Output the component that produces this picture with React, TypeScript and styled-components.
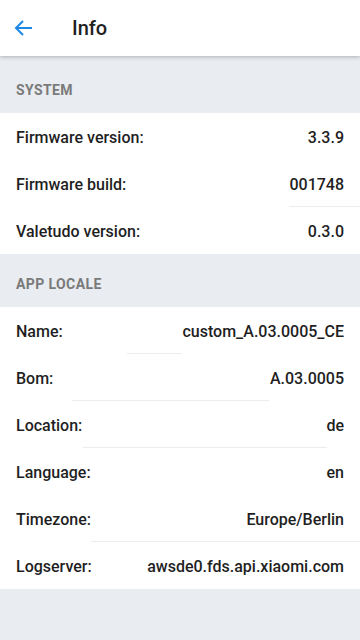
import styled, { createGlobalStyle } from 'styled-components';

const GlobalStyle = createGlobalStyle`
	html, body {
		margin: 0;
		padding: 0;
		background: #e9ecf0;
		font-family: Roboto, 'Noto Sans', sans-serif;
	}
`;

const Page = styled.div`
	width: 360px;
	min-height: 640px;
	background: #e9ecf0;
`;
const Toolbar = styled.header`
	display: flex;
	align-items: center;
	height: 56px;
	background: #ffffff;
	box-shadow: 0 1px 4px rgba(0, 0, 0, 0.25);
	position: relative;
	z-index: 1;
`;
const BackButton = styled.button`
	display: flex;
	align-items: center;
	justify-content: center;
	width: 24px;
	height: 24px;
	margin-left: 12px;
	padding: 0;
	border: none;
	background: none;
	color: #1e88e5;
`;
const Title = styled.h1`
	margin: 0 0 0 36px;
	font-size: 20px;
	font-weight: 500;
	color: #1f1f1f;
`;
const Content = styled.main`
	padding-top: 4px;
`;
const SectionTitle = styled.div`
	padding: 22px 16px 15px;
	font-size: 14px;
	line-height: 16px;
	font-weight: 700;
	letter-spacing: 0.4px;
	text-transform: uppercase;
	color: #7a7a7a;
`;
const List = styled.ul`
	margin: 0;
	padding: 0;
	list-style: none;
	background: #ffffff;
`;
const Item = styled.li``;
const Row = styled.div`
	display: flex;
	align-items: center;
	justify-content: space-between;
	box-sizing: border-box;
	height: 46px;
	padding: 2px 16px 0;
	font-size: 16px;
	font-weight: 500;
	color: #1f1f1f;
`;
const Label = styled.span``;
const Value = styled.span`
	text-align: right;
`;
const Divider = styled.div<{ $from: number; $to: number }>`
	height: 1px;
	margin-left: ${(p) => p.$from}px;
	width: ${(p) => p.$to - p.$from}px;
	background: ${(p) => (p.$to > p.$from ? '#ececec' : 'transparent')};
`;

interface Entry {
	label: string;
	value: string;
	line?: [number, number];
}

const system: Entry[] = [
	{ label: 'Firmware version:', value: '3.3.9' },
	{ label: 'Firmware build:', value: '001748', line: [289, 360] },
	{ label: 'Valetudo version:', value: '0.3.0' },
];

const locale: Entry[] = [
	{ label: 'Name:', value: 'custom_A.03.0005_CE', line: [127, 182] },
	{ label: 'Bom:', value: 'A.03.0005', line: [72, 269] },
	{ label: 'Location:', value: 'de', line: [83, 327] },
	{ label: 'Language:', value: 'en' },
	{ label: 'Timezone:', value: 'Europe/Berlin', line: [91, 360] },
	{ label: 'Logserver:', value: 'awsde0.fds.api.xiaomi.com' },
];

function InfoList({ items }: { items: Entry[] }) {
	return (
		<List>
			{items.map((item) => (
				<Item key={item.label}>
					<Row>
						<Label>{item.label}</Label>
						<Value>{item.value}</Value>
					</Row>
					<Divider $from={item.line ? item.line[0] : 0} $to={item.line ? item.line[1] : 0} />
				</Item>
			))}
		</List>
	);
}

function App() {
	return (
		<Page>
			<GlobalStyle />
			<Toolbar>
				<BackButton aria-label='Back'>
					<svg width='24' height='24' viewBox='0 0 24 24' fill='none' stroke='currentColor' strokeWidth='2'>
						<path d='M20 12H5' />
						<path d='M11 5l-7 7 7 7' />
					</svg>
				</BackButton>
				<Title>Info</Title>
			</Toolbar>
			<Content>
				<SectionTitle>System</SectionTitle>
				<InfoList items={system} />
				<SectionTitle>App locale</SectionTitle>
				<InfoList items={locale} />
			</Content>
		</Page>
	);
}

export default App;
